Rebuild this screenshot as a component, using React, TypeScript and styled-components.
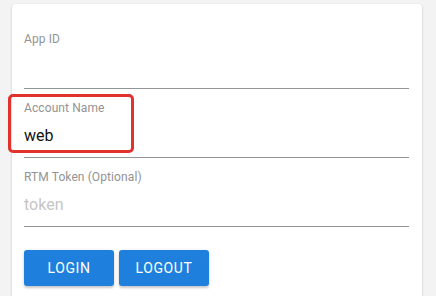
import styled, { createGlobalStyle } from 'styled-components';

const GlobalStyle = createGlobalStyle`
  html, body {
    margin: 0;
    padding: 0;
    background: #f3f3f3;
    font-family: Roboto, "Liberation Sans", sans-serif;
    overflow: hidden;
  }
`;

const Card = styled.div`
  box-sizing: border-box;
  width: 410px;
  min-height: 320px;
  margin: 4px 0 0 12px;
  padding: 27px 13px 0 12px;
  background: #fff;
  border-radius: 4px;
  box-shadow: 0 1px 3px rgba(0, 0, 0, 0.16), 0 1px 2px rgba(0, 0, 0, 0.06);
`;

const Field = styled.div`
  position: relative;
  margin-bottom: 11px;
`;

const Label = styled.label`
  display: block;
  height: 16px;
  line-height: 16px;
  font-size: 12px;
  letter-spacing: 0.1px;
  color: #939393;
  margin-bottom: 3px;
`;

const Input = styled.input`
  display: block;
  box-sizing: border-box;
  width: 100%;
  height: 39px;
  padding: 0 0 6px;
  border: none;
  border-bottom: 1px solid #949494;
  outline: none;
  background: transparent;
  font-family: Roboto, "Liberation Sans", sans-serif;
  font-size: 16px;
  color: #111;

  &::placeholder {
    color: #c6c6c6;
  }
`;

const Highlight = styled.div`
  position: absolute;
  left: -16px;
  top: -6px;
  width: 126px;
  height: 59px;
  box-sizing: border-box;
  border: 3px solid #e2322e;
  border-radius: 5px;
  pointer-events: none;
`;

const Buttons = styled.div`
  display: flex;
  gap: 5px;
  margin-top: 23px;
`;

const Button = styled.button`
  min-width: 90px;
  height: 36px;
  padding: 0 15px;
  border: none;
  border-radius: 3px;
  background: #1f7fdc;
  color: #fff;
  font-family: Roboto, "Liberation Sans", sans-serif;
  font-size: 14px;
  letter-spacing: 0.6px;
  text-transform: uppercase;
  box-shadow: 0 2px 2px rgba(0, 0, 0, 0.14), 0 1px 4px rgba(0, 0, 0, 0.12);
  cursor: pointer;
`;

export default function App() {
  return (
    <>
      <GlobalStyle />
      <Card>
        <Field>
          <Label>App ID</Label>
          <Input defaultValue="" />
        </Field>
        <Field>
          <Label>Account Name</Label>
          <Input defaultValue="web" />
          <Highlight />
        </Field>
        <Field>
          <Label>RTM Token (Optional)</Label>
          <Input placeholder="token" />
        </Field>
        <Buttons>
          <Button>Login</Button>
          <Button>Logout</Button>
        </Buttons>
      </Card>
    </>
  );
}
